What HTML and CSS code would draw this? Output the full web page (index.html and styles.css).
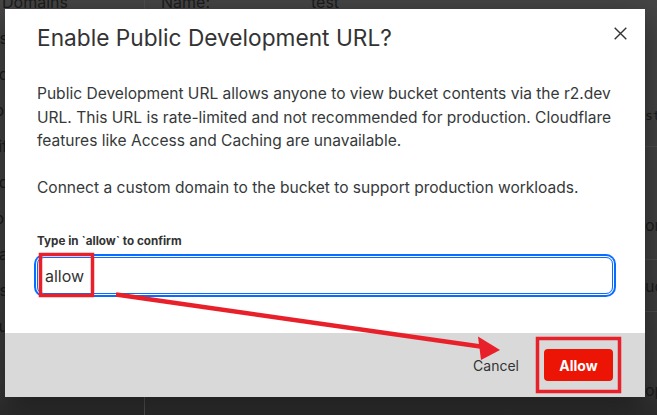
FILE: index.html
```html
<!DOCTYPE html>
<html lang="en">
<head>
<meta charset="utf-8">
<title>Enable Public Development URL?</title>
<link rel="stylesheet" href="styles.css">
</head>
<body>
<div class="page">
  <aside class="side">
    <div class="side-item side-top">Domains</div>
    <div class="side-item">Settings</div>
    <div class="side-item">Metric</div>
    <div class="side-item">Tool</div>
    <div class="side-item">Notif</div>
    <div class="side-item">Metric</div>
    <div class="side-item">Tool</div>
    <div class="side-item">Data</div>
    <div class="side-item">Ops</div>
    <div class="side-item">Menu</div>
  </aside>
  <main class="main">
    <div class="row-head"><span class="key">Name:</span><span class="val">test</span></div>
    <div class="row r1"><span class="tail mono">sto</span></div>
    <div class="row r2"><span class="tail">on.</span></div>
    <div class="row r3"><span class="tail">uc</span></div>
    <div class="row r4"><span class="tail">op</span></div>
  </main>
</div>

<div class="modal">
  <div class="modal-head">
    <h1 class="title">Enable Public Development URL?</h1>
    <button class="close" aria-label="Close">
      <svg width="13" height="13" viewBox="0 0 13 13"><path d="M0.7 0.7 L12.3 12.3 M12.3 0.7 L0.7 12.3" stroke="#333" stroke-width="1.4" fill="none"/></svg>
    </button>
  </div>
  <div class="modal-body">
    <p class="para">Public Development URL allows anyone to view bucket contents via the r2.dev URL. This URL is rate-limited and not recommended for production. Cloudflare features like Access and Caching are unavailable.</p>
    <p class="para">Connect a custom domain to the bucket to support production workloads.</p>
    <label class="label" for="confirm">Type in `allow` to confirm</label>
    <div class="input">allow</div>
  </div>
  <div class="modal-foot">
    <button class="btn-cancel">Cancel</button>
    <button class="btn-allow">Allow</button>
  </div>
</div>

<svg class="annot" width="657" height="415" viewBox="0 0 657 415">
  <rect x="40.5" y="254.5" width="52" height="41" fill="none" stroke="#e8202a" stroke-width="3.5"/>
  <rect x="537.5" y="338.5" width="82" height="53" fill="none" stroke="#e8202a" stroke-width="3.5"/>
  <line x1="116" y1="294.5" x2="484" y2="347" stroke="#e8202a" stroke-width="4.5"/>
  <polygon points="478,336.5 500,350 481,360" fill="#e8202a"/>
</svg>
</body>
</html>
```

FILE: styles.css
```css
* { box-sizing: border-box; }
html, body {
  margin: 0;
  padding: 0;
}
body {
  width: 657px;
  height: 415px;
  overflow: hidden;
  position: relative;
  font-family: Inter, "Noto Sans", sans-serif;
  background: linear-gradient(to bottom, #464646 0%, #414141 60%, #3a3a3a 92%, #2b2b2b 100%);
}

/* dimmed page behind the dialog */
.page {
  display: grid;
  grid-template-columns: 144px 1fr;
  height: 415px;
  color: #1c1c1c;
  font-size: 16px;
}
.side {
  display: flex;
  flex-direction: column;
  gap: 15px;
  padding-top: 30px;
  overflow: hidden;
}
.side-item {
  width: 8px;
  direction: rtl;
  overflow: hidden;
  white-space: nowrap;
  line-height: 21px;
  text-align: left;
}
.side-item.side-top {
  direction: ltr;
  width: 140px;
  margin-top: -38px;
  padding-left: 2px;
}
.main {
  border-left: 1px solid #505050;
  position: relative;
}
.row-head {
  display: flex;
  padding-left: 16px;
  margin-top: -8px;
  line-height: 21px;
}
.key { width: 150px; }
.row {
  display: flex;
  justify-content: flex-end;
  border-bottom: 1px solid #4e4e4e;
  line-height: 20px;
}
.tail { width: 12px; overflow: hidden; white-space: nowrap; }
.mono { font-family: "DejaVu Sans Mono", monospace; font-size: 13px; }
.r1 { height: 134px; align-items: flex-end; padding-bottom: 20px; }
.r2 { height: 113px; align-items: flex-end; padding-bottom: 24px; }
.r3 { height: 52px; align-items: center; }
.r4 { height: 98px; align-items: flex-end; padding-bottom: 10px; border-bottom: none; }

/* dialog */
.modal {
  position: absolute;
  left: 5px;
  top: 9px;
  width: 640px;
  height: 388px;
  background: #fff;
  display: flex;
  flex-direction: column;
  box-shadow: 0 8px 28px rgba(0, 0, 0, 0.45);
  color: #333;
}
.modal-head {
  display: flex;
  justify-content: space-between;
  align-items: flex-start;
  padding: 14px 18px 0 32px;
}
.title {
  margin: 0;
  font-size: 22.7px;
  font-weight: 400;
  line-height: 30px;
  color: #333;
}
.close {
  border: 0;
  background: none;
  padding: 0;
  margin-top: 4px;
  width: 13px;
  height: 13px;
  display: flex;
}
.modal-body {
  padding: 29px 28px 0 32px;
  flex: 1;
}
.para {
  margin: 0 0 23px 0;
  font-size: 15.55px;
  line-height: 23.5px;
  color: #36393a;
}
.para + .para { margin-bottom: 34px; }
.label {
  display: block;
  font-size: 11.7px;
  font-weight: 700;
  line-height: 16px;
  color: #333;
  margin-bottom: 8px;
}
.input {
  width: 576px;
  height: 37px;
  border: 1px solid #0a6cff;
  border-radius: 7px;
  box-shadow: 0 0 0 1px #fff, 0 0 0 3px #0a6cff;
  padding: 0 7px;
  display: flex;
  align-items: center;
  font-size: 16px;
  color: #333;
}
.modal-foot {
  height: 64px;
  background: #d9d9d9;
  display: flex;
  justify-content: flex-end;
  align-items: center;
  gap: 25px;
  padding: 0 32px;
}
.btn-cancel {
  border: 0;
  background: none;
  padding: 0;
  font-family: Inter, "Noto Sans", sans-serif;
  font-size: 14px;
  color: #333;
}
.btn-allow {
  border: 0;
  width: 69px;
  height: 32px;
  border-radius: 4px;
  background: #ec1405;
  color: #fff;
  font-family: Inter, "Noto Sans", sans-serif;
  font-size: 14px;
  font-weight: 700;
}

.annot {
  position: absolute;
  left: 0;
  top: 0;
  pointer-events: none;
}
```
